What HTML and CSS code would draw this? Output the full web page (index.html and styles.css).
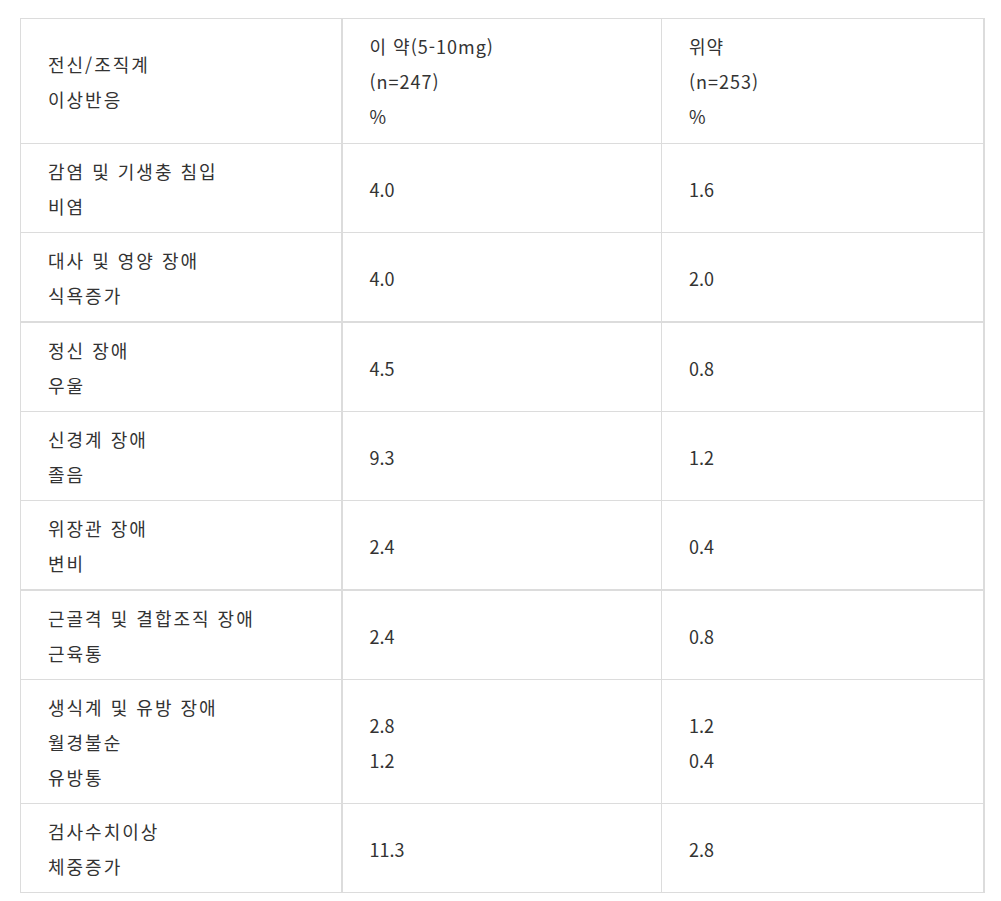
FILE: index.html
```html
<!DOCTYPE html>
<html lang="ko">
<head>
<meta charset="utf-8">
<link rel="stylesheet" href="styles.css">
</head>
<body>
<div class="wrap">
<table class="ae-table">
  <colgroup><col class="c1"><col class="c2"><col class="c3"></colgroup>
  <thead>
    <tr>
      <th>전신/조직계<br>이상반응</th>
      <th>이 약(5-10mg)<br>(n=247)<br>%</th>
      <th>위약<br>(n=253)<br>%</th>
    </tr>
  </thead>
  <tbody>
    <tr><td>감염 및 기생충 침입<br>비염</td><td>4.0</td><td>1.6</td></tr>
    <tr><td>대사 및 영양 장애<br>식욕증가</td><td>4.0</td><td>2.0</td></tr>
    <tr class="thick"><td>정신 장애<br>우울</td><td>4.5</td><td>0.8</td></tr>
    <tr><td>신경계 장애<br>졸음</td><td>9.3</td><td>1.2</td></tr>
    <tr><td>위장관 장애<br>변비</td><td>2.4</td><td>0.4</td></tr>
    <tr class="thick"><td>근골격 및 결합조직 장애<br>근육통</td><td>2.4</td><td>0.8</td></tr>
    <tr><td>생식계 및 유방 장애<br>월경불순<br>유방통</td><td>2.8<br>1.2</td><td>1.2<br>0.4</td></tr>
    <tr><td>검사수치이상<br>체중증가</td><td>11.3</td><td>2.8</td></tr>
  </tbody>
</table>
</div>
</body>
</html>
```
FILE: styles.css
```css
html, body {
  margin: 0;
  padding: 0;
  background: #fff;
}
.wrap {
  padding: 18px 0 0 20px;
}
.ae-table {
  width: 963px;
  border-collapse: collapse;
  table-layout: fixed;
  font-family: "Noto Sans CJK KR", "Noto Sans", sans-serif;
  font-size: 18px;
  color: #333;
}
.ae-table .c1 { width: 321px; }
.ae-table .c2 { width: 320px; }
.ae-table .c3 { width: 322px; }
.ae-table th,
.ae-table td {
  border: 1px solid #dcdcdc;
  padding: 10px 27px 8px 27px;
  line-height: 35px;
  text-align: left;
  vertical-align: middle;
  font-weight: normal;
}
.ae-table th {
  padding-bottom: 9px;
  letter-spacing: 1px;
}
.ae-table th:first-child,
.ae-table td:first-child {
  letter-spacing: 2px;
}
.ae-table th:nth-child(2),
.ae-table td:nth-child(2) {
  border-left: 2px solid #dcdcdc;
}
.ae-table th:last-child,
.ae-table td:last-child {
  border-right: 2px solid #dcdcdc;
}
.ae-table tr.thick td {
  border-top: 2px solid #dcdcdc;
}
```
